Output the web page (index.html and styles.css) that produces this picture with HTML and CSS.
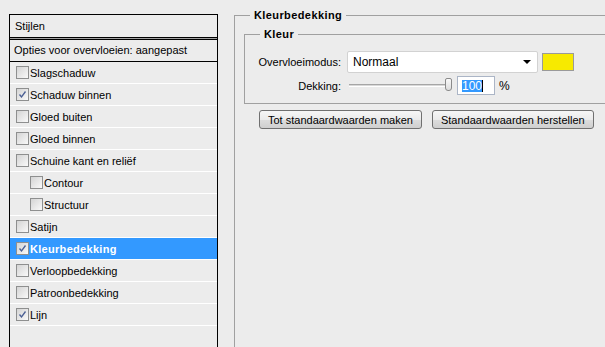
FILE: index.html
```html
<!DOCTYPE html>
<html lang="nl">
<head>
    <meta charset="UTF-8">
    <title>Laagstijl - Kleurbedekking</title>
    <link rel="stylesheet" href="styles.css">
</head>
<body>
    <div class="dialog">
        <!-- lijst met stijlen -->
        <div class="styles-list">
            <div class="list-head">Stijlen</div>
            <div class="list-body">
                <div class="blend">Opties voor overvloeien: aangepast</div>
                <div class="item"><span class="check"></span>Slagschaduw</div>
                <div class="item"><span class="check on"><svg viewBox="0 0 11 11"><path d="M2.5 5.5 L4.5 8 L8.5 2.5"/></svg></span>Schaduw binnen</div>
                <div class="item"><span class="check"></span>Gloed buiten</div>
                <div class="item"><span class="check"></span>Gloed binnen</div>
                <div class="item"><span class="check"></span>Schuine kant en reliëf</div>
                <div class="item sub"><span class="check"></span>Contour</div>
                <div class="item sub"><span class="check"></span>Structuur</div>
                <div class="item"><span class="check"></span>Satijn</div>
                <div class="item active"><span class="check on"><svg viewBox="0 0 11 11"><path d="M2.5 5.5 L4.5 8 L8.5 2.5"/></svg></span>Kleurbedekking</div>
                <div class="item"><span class="check"></span>Verloopbedekking</div>
                <div class="item"><span class="check"></span>Patroonbedekking</div>
                <div class="item"><span class="check on"><svg viewBox="0 0 11 11"><path d="M2.5 5.5 L4.5 8 L8.5 2.5"/></svg></span>Lijn</div>
            </div>
        </div>

        <!-- instellingen -->
        <div class="settings">
            <fieldset class="group outer">
                <legend>Kleurbedekking</legend>
                <fieldset class="group inner">
                    <legend>Kleur</legend>
                    <div class="field">
                        <label>Overvloeimodus:</label>
                        <div class="select">Normaal<span class="arrow"></span></div>
                        <div class="swatch"></div>
                    </div>
                    <div class="field">
                        <label>Dekking:</label>
                        <div class="slider"><span class="thumb"></span></div>
                        <div class="number"><span class="selected">100</span><span class="caret"></span></div>
                        <span class="unit">%</span>
                    </div>
                </fieldset>
                <div class="buttons">
                    <button>Tot standaardwaarden maken</button>
                    <button>Standaardwaarden herstellen</button>
                </div>
            </fieldset>
        </div>
    </div>
</body>
</html>
```

FILE: styles.css
```css
html, body {
    margin: 0;
    height: 100%;
    overflow: hidden;
}

body {
    background-color: #ececec;
    font-family: "Liberation Sans", Arial, sans-serif;
    font-size: 11px;
    color: #000;
}

.dialog {
    display: flex;
    align-items: flex-start;
    padding-left: 9px;
}

/* linker lijst */
.styles-list {
    flex: none;
    width: 207px;
    height: 400px;
    margin-top: 14px;
    border: 1px solid #000;
    border-bottom: none;
}

.list-head {
    height: 22px;
    line-height: 22px;
    padding-left: 5px;
    border-bottom: 1px solid #000;
    box-shadow: 0 1px 0 #a0a0a0;
}

.list-body {
    margin-top: 1px;
    border-top: 1px solid #000;
}

.blend {
    height: 21px;
    line-height: 21px;
    padding-left: 4px;
    white-space: nowrap;
    border-bottom: 1px solid #000;
}

.item {
    display: flex;
    align-items: center;
    height: 21px;
    padding-left: 6px;
    white-space: nowrap;
    border-bottom: 1px solid #fff;
}

.item.sub {
    padding-left: 20px;
}

.item.active {
    background-color: #3399ff;
    color: #fff;
    font-weight: bold;
    letter-spacing: 0.3px;
}

.check {
    flex: none;
    width: 11px;
    height: 11px;
    margin-right: 1px;
    border: 1px solid #8e8f8f;
    background: linear-gradient(135deg, #d4d4d4, #f9f9f9);
}

.check svg {
    display: block;
    width: 11px;
    height: 11px;
}

.check svg path {
    fill: none;
    stroke: #4a5f94;
    stroke-width: 1.3;
}

/* rechter deel */
.settings {
    flex: none;
    margin-left: 16px;
    margin-top: 9px;
}

.group {
    margin: 0;
    border: 1px solid #a0a0a0;
    min-width: 0;
}

.group legend {
    margin-left: 15px;
    padding: 0 4px;
    line-height: 13px;
    font-weight: bold;
    letter-spacing: 0.4px;
}

.outer {
    width: 420px;
    height: 400px;
    padding: 6px 0 0 0;
}

.inner {
    width: 400px;
    margin-left: 9px;
    padding: 10px 0 8px 0;
}

.field {
    display: flex;
    align-items: center;
}

.field + .field {
    margin-top: 3px;
}

.field label {
    width: 96px;
    margin-right: 6px;
    text-align: right;
}

.select {
    position: relative;
    box-sizing: border-box;
    width: 191px;
    height: 22px;
    line-height: 20px;
    padding-left: 5px;
    font-size: 12px;
    background-color: #fff;
    border: 1px solid #d2d2d2;
    border-radius: 2px;
}

.arrow {
    position: absolute;
    right: 6px;
    top: 8px;
    border-left: 4px solid transparent;
    border-right: 4px solid transparent;
    border-top: 4px solid #000;
}

.swatch {
    width: 30px;
    height: 16px;
    margin-left: 4px;
    background-color: #f7ea00;
    border: 1px solid #9a9a9a;
}

.slider {
    position: relative;
    width: 103px;
    height: 1px;
    margin-left: 2px;
    border-top: 1px solid #a6a6a6;
    background-color: #d8d8d8;
    border-bottom: 1px solid #fff;
}

.thumb {
    position: absolute;
    right: 0;
    top: -7px;
    box-sizing: border-box;
    width: 7px;
    height: 13px;
    border: 1px solid #8a8a8a;
    border-radius: 2px 2px 3px 3px;
    background: linear-gradient(#fafafa, #dcdcdc);
}

.number {
    display: flex;
    align-items: center;
    box-sizing: border-box;
    width: 38px;
    height: 19px;
    margin-left: 5px;
    padding-left: 4px;
    background-color: #fff;
    border: 1px solid #abb5c6;
    font-size: 12px;
}

.selected {
    background-color: #3399ff;
    color: #fff;
    line-height: 12px;
}

.caret {
    width: 1px;
    height: 12px;
    background-color: #000;
}

.unit {
    margin-left: 4px;
    font-size: 12px;
}

.buttons {
    display: flex;
    gap: 10px;
    margin-top: 6px;
    padding-left: 24px;
}

button {
    height: 19px;
    padding: 0 8px;
    font-family: inherit;
    font-size: 11px;
    color: #000;
    border: 1px solid #707070;
    border-radius: 3px;
    background: linear-gradient(#f6f6f6 0%, #ebebeb 50%, #dddddd 51%, #cfcfcf 100%);
}
```
